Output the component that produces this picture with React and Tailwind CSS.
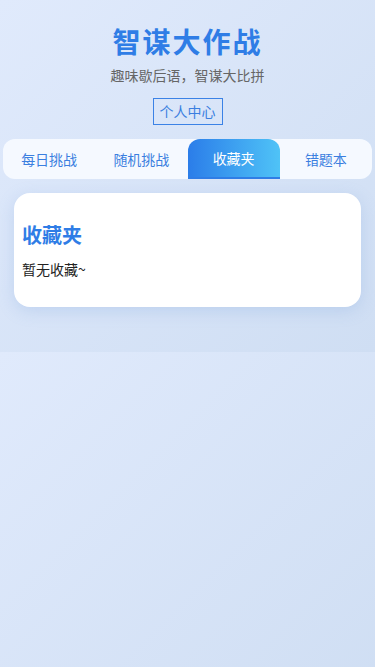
import { useState } from 'react'

const TABS = [
  { key: 'daily', label: '每日挑战' },
  { key: 'random', label: '随机挑战' },
  { key: 'fav', label: '收藏夹' },
  { key: 'wrong', label: '错题本' },
]

const FONT = "font-['Noto_Sans_CJK_SC','Noto_Sans',sans-serif]"

export default function App() {
  const [tab, setTab] = useState('fav')

  return (
    <div className={`min-h-screen bg-[linear-gradient(135deg,#e0eafc,#cfdef3)] bg-[length:100%_352px] bg-repeat-y ${FONT}`}>
      <div className="h-[352px] bg-[linear-gradient(135deg,#e0eafc,#cfdef3)] px-[3px] pt-[21px]">
        {/* Header */}
        <div className="flex flex-col items-center">
          <h1 className="text-[28px] leading-[40px] font-bold tracking-[2px] text-[#2f7de6]">智谋大作战</h1>
          <p className="mt-[4px] text-[14px] leading-[20px] text-[#666]">趣味歇后语，智谋大比拼</p>
          <button className="mt-[13px] border border-[#3b82e6] px-[6px] py-[4px] text-[14px] leading-[17px] text-[#3b7fe0]">
            个人中心
          </button>
        </div>

        {/* Tabs */}
        <div className="mt-[14px] flex h-[40px] rounded-[12px] bg-[#f5f9ff]">
          {TABS.map(t => (
            <button
              key={t.key}
              onClick={() => setTab(t.key)}
              className={`flex-1 text-[14px] ${
                tab === t.key
                  ? 'rounded-t-[12px] border-b-2 border-[#2f7de6] bg-[linear-gradient(90deg,#2b7de9,#4fc3f7)] text-white'
                  : 'text-[#3b7fe0]'
              }`}
            >
              {t.label}
            </button>
          ))}
        </div>

        {/* Content card */}
        <div className="mx-[11px] mt-[14px] h-[114px] rounded-[16px] bg-white px-[8px] pt-[28px] shadow-[0_4px_16px_rgba(120,160,220,0.25)]">
          <h2 className="text-[20px] leading-[28px] font-bold text-[#2f7de6]">收藏夹</h2>
          <p className="mt-[10px] text-[14px] leading-[20px] text-[#222]">暂无收藏~</p>
        </div>
      </div>
    </div>
  )
}
